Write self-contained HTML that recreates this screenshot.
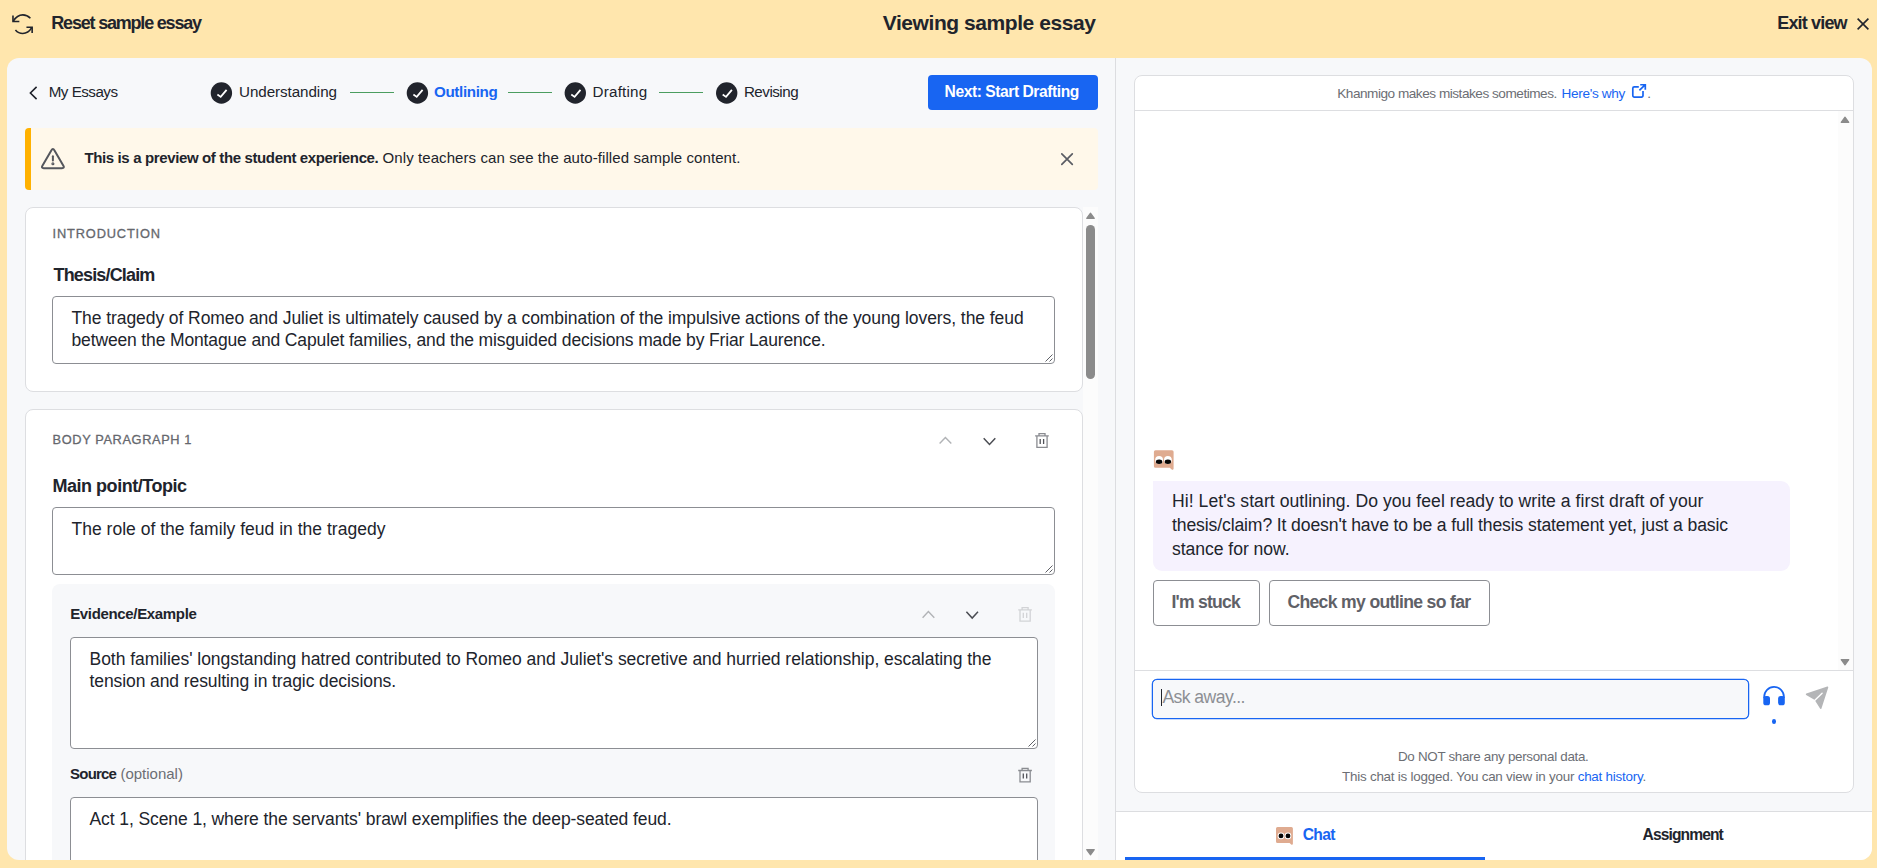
<!DOCTYPE html>
<html lang="en">
<head>
<meta charset="utf-8">
<title>Viewing sample essay</title>
<style>
*{box-sizing:border-box;margin:0;padding:0}
html,body{width:1877px;height:868px;overflow:hidden}
body{background:#ffe6ad;font-family:"Liberation Sans",Arial,sans-serif;color:#21242c;position:relative;-webkit-font-smoothing:antialiased}
.abs{position:absolute}
.t{position:absolute;white-space:nowrap;line-height:1}
.b{font-weight:bold}
svg{display:block;position:absolute;overflow:visible}
/* top bar */
#topbar{position:absolute;left:0;top:0;width:1877px;height:58px}
/* main container */
#main{position:absolute;left:7px;top:58px;width:1865px;height:802px;background:#f7f8fa;border-radius:12px;overflow:hidden}
#divider{position:absolute;left:1108px;top:0;width:1px;height:802px;background:#dcdde0}
/* everything inside #main is positioned relative to main (offset 7,58) */
.card{position:absolute;background:#fff;border:1px solid #dddee1;border-radius:8px}
.ta{position:absolute;background:#fff;border:1px solid #8c8e93;border-radius:4px}
.ta .txt{position:absolute;left:18px;top:10px;font-size:17.5px;line-height:22px;white-space:nowrap;color:#21242c}
.lbl{color:#65676d;font-size:12.8px;-webkit-text-stroke:.3px #65676d}
.h18{font-size:18px;font-weight:bold}
.h16{font-size:15px;font-weight:bold}
.step{font-size:15.2px}
.line{position:absolute;height:1px;background:#4b9d5f;top:34px}
#t-reset{letter-spacing:-1.201px;margin-left:-0.70px;margin-top:-0.30px;}
#t-title{letter-spacing:-0.440px;margin-left:0.40px;margin-top:0.20px;}
#t-exit{letter-spacing:-0.827px;margin-left:-0.40px;margin-top:-0.50px;}
#t-myessays{letter-spacing:-0.514px;margin-left:-0.30px;margin-top:-1.79px;}
#t-s1{letter-spacing:-0.077px;margin-left:0.10px;margin-top:-1.79px;}
#t-s2{letter-spacing:-0.338px;margin-left:-0.10px;margin-top:-1.79px;}
#t-s3{letter-spacing:0.202px;margin-left:-0.40px;margin-top:-1.79px;}
#t-s4{letter-spacing:-0.506px;margin-left:-0.10px;margin-top:-1.79px;}
#t-next{letter-spacing:-0.438px;margin-left:-1.20px;margin-top:-0.30px;}
#t-banner{margin-left:0.40px;margin-top:0.00px;}
#t-banner-b{letter-spacing:-0.366px;}
#t-banner-r{letter-spacing:0.084px;}
#t-intro{letter-spacing:0.849px;margin-left:0.00px;margin-top:-0.60px;}
#t-thesis{letter-spacing:-0.837px;margin-left:1.00px;margin-top:-0.20px;}
#t-ta1{margin-left:0.50px;margin-top:-0.10px;}
#t-ta1a{letter-spacing:-0.073px;}
#t-ta1b{letter-spacing:-0.144px;}
#t-body1{letter-spacing:0.614px;margin-left:0.00px;margin-top:-0.30px;}
#t-main{letter-spacing:-0.479px;}
#t-ta2{margin-left:0.50px;margin-top:-0.50px;}
#t-ta2a{letter-spacing:0.018px;}
#t-evid{letter-spacing:-0.340px;margin-left:-0.30px;margin-top:-1.29px;}
#t-ta3{margin-left:0.50px;margin-top:0.00px;}
#t-ta3a{letter-spacing:-0.038px;}
#t-ta3b{letter-spacing:-0.091px;}
#t-src-b{letter-spacing:-0.810px;margin-left:0.10px;margin-top:-1.30px;}
#t-src-o{letter-spacing:-0.005px;margin-left:-0.30px;margin-top:-1.30px;}
#t-ta4{margin-left:0.50px;margin-top:0.00px;}
#t-ta4a{letter-spacing:-0.093px;}
#t-km{letter-spacing:-0.474px;margin-left:-0.80px;margin-top:0.20px;}
#t-why{letter-spacing:-0.341px;margin-left:-0.40px;margin-top:0.20px;}
#t-dot{margin-left:0.00px;margin-top:0.20px;}
#bubtxt{margin-left:1.50px;margin-top:-0.10px;}
#t-b1{letter-spacing:0.040px;}
#t-b2{letter-spacing:-0.126px;}
#t-b3{letter-spacing:-0.056px;}
#t-stuck{letter-spacing:-0.764px;margin-left:-0.80px;margin-top:-0.20px;}
#t-check{letter-spacing:-0.669px;margin-left:-0.30px;margin-top:-0.20px;}
#t-ask{letter-spacing:-0.560px;margin-left:0.00px;margin-top:-0.30px;}
#t-f1{letter-spacing:-0.306px;margin-left:-1.00px;margin-top:-0.30px;}
#t-f2{letter-spacing:-0.220px;margin-left:0.00px;margin-top:-0.30px;}
#t-chat{letter-spacing:-0.689px;margin-left:-0.10px;margin-top:-0.20px;}
#t-assign{letter-spacing:-0.895px;margin-left:-0.10px;margin-top:-0.20px;}
</style>
</head>
<body>
<div id="topbar">
  <svg id="ic-reset" style="left:10px;top:12px" width="24" height="24" viewBox="-0.45 -0.5 24 24" fill="none" stroke="#21242c" stroke-width="1.6" stroke-linecap="butt" stroke-linejoin="miter"><path d="M2.9 8.6C5.3 4.6 8.6 2.37 12.35 2.37C15.4 2.37 17.9 3.7 19.95 5.8"/><path d="M2.53 3.06V9.05H8.9"/><path d="M4.98 17.58C6.9 19.8 9.4 21.03 12.35 21.03C16 21.03 19.1 18.8 21.35 15.2"/><path d="M16 14.8H21.7V20.5"/></svg>
  <span class="t b" id="t-reset" style="left:52px;top:14.3px;font-size:18px">Reset sample essay</span>
  <span class="t b" id="t-title" style="left:882.4px;top:12px;font-size:21px">Viewing sample essay</span>
  <span class="t b" id="t-exit" style="left:1777.6px;top:14.3px;font-size:18px">Exit view</span>
  <svg id="ic-exit" style="left:1857px;top:18px" width="12" height="12" viewBox="0 0 12 12" stroke="#21242c" stroke-width="1.6" stroke-linecap="butt"><path d="M.6 .6l10.8 10.8M11.4 .6L.6 11.4"/></svg>
</div>

<div id="main">
  <div id="divider"></div>
  <!-- LEFT PANE -->
  <div id="left" class="abs" style="left:0;top:0;width:1108px;height:802px;overflow:hidden">
    <!-- nav row -->
    <svg style="left:22px;top:28px" width="9" height="14" viewBox="0 0 9 14" fill="none" stroke="#21242c" stroke-width="1.6" stroke-linecap="butt" stroke-linejoin="miter"><path d="M7.6 .9L1.4 7l6.2 6.1"/></svg>
    <span class="t step" id="t-myessays" style="left:42px;top:27.6px">My Essays</span>

    <svg class="chk" style="left:203px;top:24px" width="22" height="22" viewBox="-0.4 0 22 22"><circle cx="11" cy="11" r="10.7" fill="#21242c"/><path d="M7 12.6L10.3 14.9L16.2 7.8" fill="none" stroke="#fff" stroke-width="1.8" stroke-linecap="butt" stroke-linejoin="miter"/></svg>
    <span class="t step" id="t-s1" style="left:232px;top:27.6px">Understanding</span>
    <div class="line" style="left:343px;width:44px"></div>

    <svg class="chk" style="left:399px;top:24px" width="22" height="22" viewBox="-0.4 0 22 22"><circle cx="11" cy="11" r="10.7" fill="#21242c"/><path d="M7 12.6L10.3 14.9L16.2 7.8" fill="none" stroke="#fff" stroke-width="1.8" stroke-linecap="butt" stroke-linejoin="miter"/></svg>
    <span class="t step b" id="t-s2" style="left:427px;top:27.6px;color:#1865f2">Outlining</span>
    <div class="line" style="left:501px;width:44px"></div>

    <svg class="chk" style="left:557px;top:24px" width="22" height="22" viewBox="-0.3 0 22 22"><circle cx="11" cy="11" r="10.7" fill="#21242c"/><path d="M7 12.6L10.3 14.9L16.2 7.8" fill="none" stroke="#fff" stroke-width="1.8" stroke-linecap="butt" stroke-linejoin="miter"/></svg>
    <span class="t step" id="t-s3" style="left:586px;top:27.6px">Drafting</span>
    <div class="line" style="left:652px;width:44px"></div>

    <svg class="chk" style="left:708px;top:24px" width="22" height="22" viewBox="-0.7 0 22 22"><circle cx="11" cy="11" r="10.7" fill="#21242c"/><path d="M7 12.6L10.3 14.9L16.2 7.8" fill="none" stroke="#fff" stroke-width="1.8" stroke-linecap="butt" stroke-linejoin="miter"/></svg>
    <span class="t step" id="t-s4" style="left:737px;top:27.6px">Revising</span>

    <div id="btn-next" class="abs" style="left:921px;top:17px;width:170px;height:35px;background:#1865f2;border-radius:4px"></div>
    <span class="t b" id="t-next" style="left:938.8px;top:26.3px;font-size:15.6px;color:#fff">Next: Start Drafting</span>

    <!-- banner -->
    <div id="banner" class="abs" style="left:18px;top:70px;width:1073px;height:62px;background:#fff8ea;border-radius:4px;overflow:hidden"><div style="position:absolute;left:0;top:0;width:6px;height:62px;background:#ffb100"></div></div>
    <svg style="left:34px;top:89px" width="24" height="24" viewBox="0 0 24 24" fill="none" stroke="#55575d" stroke-width="2" stroke-linejoin="round" stroke-linecap="round"><path d="M10.3 3.4Q11.9 .6 13.5 3.4L22.4 18.8Q23.8 21.2 21 21.2H2.8Q0 21.2 1.4 18.8Z"/><path d="M11.9 9.2v4.4"/><circle cx="11.9" cy="16.8" r=".55" fill="#55575d"/></svg>
    <span class="t" id="t-banner" style="left:77px;top:92px;font-size:15px"><b id="t-banner-b">This is a preview of the student experience.</b> <span id="t-banner-r">Only teachers can see the auto-filled sample content.</span></span>
    <svg style="left:1054px;top:95px" width="12" height="12" viewBox="0 0 12 12" stroke="#5b5d64" stroke-width="1.7" stroke-linecap="round"><path d="M.8 .8l10.5 10.5M11.3 .8L.8 11.3"/></svg>

    <!-- scroll area -->
    <div id="scrolltrack" class="abs" style="left:1076px;top:149px;width:15px;height:653px;background:#fcfcfc"></div>
    <svg style="left:1079px;top:154px" width="9" height="7" viewBox="0 0 9 7"><path d="M4.5 1.2L8.3 6.3H.7z" fill="#8b8b8b" stroke="#8b8b8b" stroke-width="1.2" stroke-linejoin="round"/></svg>
    <div class="abs" style="left:1079px;top:167px;width:9px;height:154px;background:#8b8b8b;border-radius:4.5px"></div>
    <svg style="left:1079px;top:791px" width="9" height="7" viewBox="0 0 9 7"><path d="M4.5 5.8L8.3 .7H.7z" fill="#8b8b8b" stroke="#8b8b8b" stroke-width="1.2" stroke-linejoin="round"/></svg>

    <!-- intro card -->
    <div class="card" style="left:18px;top:149px;width:1058px;height:185px"></div>
    <span class="t lbl" id="t-intro" style="left:45.6px;top:170.3px">INTRODUCTION</span>
    <span class="t h18" id="t-thesis" style="left:45.5px;top:208px">Thesis/Claim</span>
    <div class="ta" style="left:45px;top:238px;width:1003px;height:68px">
      <div class="txt" id="t-ta1"><span id="t-ta1a">The tragedy of Romeo and Juliet is ultimately caused by a combination of the impulsive actions of the young lovers, the feud</span> <br><span id="t-ta1b">between the Montague and Capulet families, and the misguided decisions made by Friar Laurence.</span></div>
      <svg style="right:1px;bottom:1px" width="8" height="8" viewBox="0 0 8 8" stroke="#5f6167" stroke-width="1"><path d="M7.5 .5l-7 7M7.5 4.5l-3 3"/></svg>
    </div>

    <!-- body card -->
    <div class="card" style="left:18px;top:351px;width:1058px;height:520px"></div>
    <span class="t lbl" id="t-body1" style="left:45.6px;top:376.3px">BODY PARAGRAPH 1</span>
    <svg style="left:932px;top:378px" width="13" height="9" viewBox="0 0 13 9" fill="none" stroke="#b1b3b6" stroke-width="1.4" stroke-linejoin="miter"><path d="M.6 7.6L6.4 1.4l5.9 6.2"/></svg>
    <svg style="left:976px;top:379px" width="13" height="9" viewBox="0 0 13 9" fill="none" stroke="#4b4d53" stroke-width="1.5" stroke-linejoin="miter"><path d="M.7 1.2l5.8 6.3 5.8-6.3"/></svg>
    <svg class="trash" style="left:1028px;top:375px" width="14" height="15" viewBox="0 0 14 15" fill="none" stroke="#8a8c91" stroke-width="1.3"><path d="M.1 2.9h13.7M4 2.9V.7h6v2.2M1.9 2.9v11.4h10.2V2.9"/><path d="M5.2 5.9V11M8.6 5.9V11" stroke="#505258"/></svg>
    <span class="t h18" id="t-main" style="left:45.5px;top:419px">Main point/Topic</span>
    <div class="ta" style="left:45px;top:449px;width:1003px;height:68px">
      <div class="txt" id="t-ta2"><span id="t-ta2a">The role of the family feud in the tragedy</span></div>
      <svg style="right:1px;bottom:1px" width="8" height="8" viewBox="0 0 8 8" stroke="#5f6167" stroke-width="1"><path d="M7.5 .5l-7 7M7.5 4.5l-3 3"/></svg>
    </div>

    <!-- evidence sub-card -->
    <div class="abs" style="left:45px;top:526px;width:1003px;height:330px;background:#f7f8fa;border-radius:8px"></div>
    <span class="t h16" id="t-evid" style="left:63.5px;top:549.2px">Evidence/Example</span>
    <svg style="left:915px;top:552px" width="13" height="9" viewBox="0 -0.1 13 9" fill="none" stroke="#b1b3b6" stroke-width="1.4" stroke-linejoin="miter"><path d="M.6 7.6L6.4 1.4l5.9 6.2"/></svg>
    <svg style="left:958px;top:552px" width="13" height="9" viewBox="-0.7 -0.6 13 9" fill="none" stroke="#4b4d53" stroke-width="1.5" stroke-linejoin="miter"><path d="M.7 1.2l5.8 6.3 5.8-6.3"/></svg>
    <svg class="trash" style="left:1011px;top:548px" width="14" height="15" viewBox="-0.1 -0.9 14 15" fill="none" stroke="#d2d3d6" stroke-width="1.3"><path d="M.1 2.9h13.7M4 2.9V.7h6v2.2M1.9 2.9v11.4h10.2V2.9"/><path d="M5.2 5.9V11M8.6 5.9V11" stroke="#d2d3d6"/></svg>
    <div class="ta" style="left:63px;top:579px;width:968px;height:112px">
      <div class="txt" id="t-ta3"><span id="t-ta3a">Both families' longstanding hatred contributed to Romeo and Juliet's secretive and hurried relationship, escalating the</span> <br><span id="t-ta3b">tension and resulting in tragic decisions.</span></div>
      <svg style="right:1px;bottom:1px" width="8" height="8" viewBox="0 0 8 8" stroke="#5f6167" stroke-width="1"><path d="M7.5 .5l-7 7M7.5 4.5l-3 3"/></svg>
    </div>
    <span class="t b" id="t-src-b" style="left:63px;top:709px;font-size:15px">Source</span> <span class="t" id="t-src-o" style="left:113.7px;top:709px;font-size:15px;color:#6c6e74">(optional)</span>
    <svg class="trash" style="left:1011px;top:709px" width="14" height="15" viewBox="-0.1 -0.6 14 15" fill="none" stroke="#8a8c91" stroke-width="1.3"><path d="M.1 2.9h13.7M4 2.9V.7h6v2.2M1.9 2.9v11.4h10.2V2.9"/><path d="M5.2 5.9V11M8.6 5.9V11" stroke="#505258"/></svg>
    <div class="ta" style="left:63px;top:739px;width:968px;height:68px">
      <div class="txt" id="t-ta4"><span id="t-ta4a">Act 1, Scene 1, where the servants' brawl exemplifies the deep-seated feud.</span></div>
    </div>
  </div>

  <!-- RIGHT PANE -->
  <div id="right" class="abs" style="left:1109px;top:0;width:756px;height:802px;overflow:hidden">
        <div id="tabbar" class="abs" style="left:0;top:753px;width:756px;height:49px;background:#fff;border-top:1px solid #dcdde0"></div>
    <div id="panel" class="abs" style="left:18px;top:17px;width:720px;height:718px;background:#fff;border:1px solid #dddee1;border-radius:8px"></div>
    <div class="abs" style="left:19px;top:52px;width:718px;height:1px;background:#dddee1"></div>
    <span class="t" id="t-km" style="left:222px;top:29px;font-size:13.6px;color:#6c6e74">Khanmigo makes mistakes sometimes.</span>
    <span class="t" id="t-why" style="left:446px;top:29px;font-size:13.6px;color:#1865f2">Here's why</span>
    <svg style="left:515px;top:25px" width="16" height="16" viewBox="0 0 16 16" fill="none" stroke="#1865f2" stroke-width="1.7" stroke-linejoin="miter"><path d="M7.8 3.85H3.3a1.5 1.5 0 0 0-1.5 1.5v7.2a1.5 1.5 0 0 0 1.5 1.5h7.2a1.5 1.5 0 0 0 1.5-1.5V8.1" stroke-linecap="butt"/><path d="M8.4 7.4L14 1.8M9.2 1.75h5.1v5.05"/></svg>
    <span class="t" id="t-dot" style="left:531.3px;top:29px;font-size:13.6px;color:#6c6e74">.</span>

    <div class="abs" style="left:722px;top:53px;width:15px;height:559px;background:#fcfcfc"></div>
    <svg style="left:724px;top:58px" width="9" height="7" viewBox="-0.5 0 9 7"><path d="M4.5 1.2L8.3 6.3H.7z" fill="#8b8b8b" stroke="#8b8b8b" stroke-width="1.2" stroke-linejoin="round"/></svg>
    <svg style="left:724px;top:601px" width="9" height="7" viewBox="-0.5 0 9 7"><path d="M4.5 5.8L8.3 .7H.7z" fill="#8b8b8b" stroke="#8b8b8b" stroke-width="1.2" stroke-linejoin="round"/></svg>

    <!-- avatar -->
    <svg style="left:37px;top:392px" width="20" height="20" viewBox="-0.9 -0.2 20 20"><path d="M1.6 0h16.5a1.6 1.6 0 0 1 1.6 1.6V18.6a1.1 1.1 0 0 1-1.9 .7L15.9 17.6H1.6A1.6 1.6 0 0 1 0 16V1.6A1.6 1.6 0 0 1 1.6 0z" fill="#dfab90"/><ellipse cx="5.2" cy="9.8" rx="3.9" ry="4.05" fill="#fff"/><ellipse cx="14" cy="9.8" rx="3.9" ry="4.05" fill="#fff"/><ellipse cx="5.2" cy="11.6" rx="3.2" ry="2.25" fill="#050505"/><ellipse cx="14" cy="11.6" rx="3.2" ry="2.25" fill="#050505"/></svg>
    <div id="bubble" class="abs" style="left:37px;top:423px;width:637px;height:90px;background:#f6f2fe;border-radius:0 9px 9px 9px"></div>
    <div class="abs" id="bubtxt" style="left:54.5px;top:431px;font-size:17.6px;line-height:24px;white-space:nowrap"><span id="t-b1">Hi! Let's start outlining. Do you feel ready to write a first draft of your</span> <br><span id="t-b2">thesis/claim? It doesn't have to be a full thesis statement yet, just a basic</span> <br><span id="t-b3">stance for now.</span></div>

    <div class="abs" style="left:37px;top:522px;width:107px;height:46px;border:1px solid #8c8e93;border-radius:4px;background:#fff"></div>
    <span class="t b" id="t-stuck" style="left:56.2px;top:536px;font-size:17.6px;color:#5f6167">I'm stuck</span>
    <div class="abs" style="left:153px;top:522px;width:221px;height:46px;border:1px solid #8c8e93;border-radius:4px;background:#fff"></div>
    <span class="t b" id="t-check" style="left:171.7px;top:536px;font-size:17.6px;color:#5f6167">Check my outline so far</span>

    <div class="abs" style="left:19px;top:612px;width:718px;height:1px;background:#dddee1"></div>
    <div id="input" class="abs" style="left:36px;top:621px;width:597px;height:40px;background:#f7f8fa;border:1px solid #1865f2;box-shadow:0 0 0 .25px #1865f2;border-radius:5px"></div>
    <div class="abs" style="left:45px;top:631px;width:1px;height:17px;background:#21242c"></div>
    <span class="t" id="t-ask" style="left:46.4px;top:631px;font-size:17.6px;color:#8d8f94">Ask away...</span>

    <svg style="left:647px;top:628px" width="22" height="20" viewBox="0 0 22 20" fill="none"><path d="M1.15 12V10.85a9.9 9.9 0 0 1 19.8 0V12" stroke="#1865f2" stroke-width="1.7"/><rect x=".3" y="10" width="6.7" height="9.3" rx="2.6" fill="#1865f2"/><rect x="15.1" y="10" width="6.7" height="9.3" rx="2.6" fill="#1865f2"/></svg>
    <div class="abs" style="left:655.8px;top:661px;width:4.4px;height:5.1px;border-radius:50%;background:#1865f2"></div>
    <svg style="left:688px;top:627px" width="26" height="26" viewBox="688 627 26 26"><path d="M711.5 629.3L690.6 636.2L699.2 641.4L704.7 650.2Z" fill="#b4b5b7" stroke="#b4b5b7" stroke-width="1.6" stroke-linejoin="round"/><path d="M698.6 642.5L706.1 635.3" stroke="#fff" stroke-width="1.4" stroke-linecap="round"/></svg>

    <span class="t" id="t-f1" style="left:283px;top:692px;font-size:13.4px;color:#6c6e74">Do NOT share any personal data.</span>
    <span class="t" id="t-f2" style="left:226px;top:712px;font-size:13.4px;color:#6c6e74">This chat is logged. You can view in your <span style="color:#1865f2">chat history</span>.</span>

    <svg style="left:160px;top:769px" width="18" height="18" viewBox="0 0 18 18"><path d="M1.5 0h13.9a1.5 1.5 0 0 1 1.5 1.5V16.8a1 1 0 0 1-1.7 .7L13.6 15.9H1.5A1.5 1.5 0 0 1 0 14.4V1.5A1.5 1.5 0 0 1 1.5 0z" fill="#dfab90"/><circle cx="5" cy="8.9" r="3.3" fill="#fff"/><circle cx="12" cy="8.9" r="3.3" fill="#fff"/><circle cx="5" cy="8.9" r="2.45" fill="#050505"/><circle cx="12" cy="8.9" r="2.45" fill="#050505"/></svg>
    <span class="t b" id="t-chat" style="left:186.9px;top:769px;font-size:15.6px;color:#1865f2">Chat</span>
    <div class="abs" style="left:9px;top:799px;width:360px;height:3px;background:#1865f2"></div>
    <span class="t b" id="t-assign" style="left:526.7px;top:769px;font-size:15.6px">Assignment</span>

  </div>
</div>
</body>
</html>
